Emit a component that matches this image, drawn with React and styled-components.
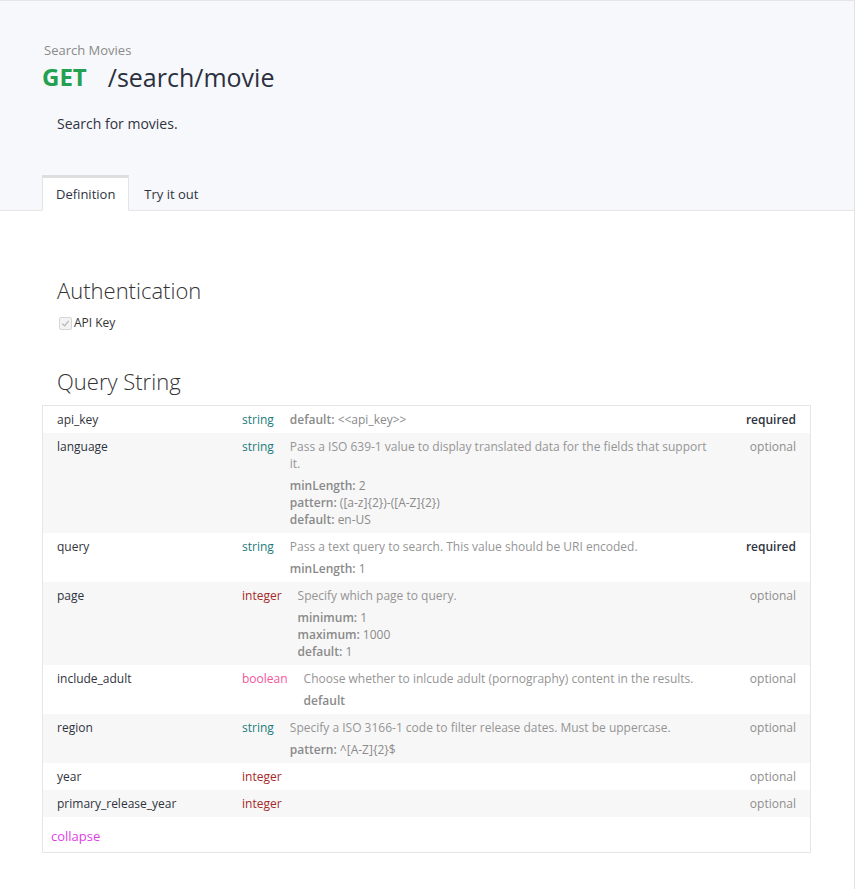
import React from "react";
import styled, { createGlobalStyle } from "styled-components";

const GlobalStyle = createGlobalStyle`
  body {
    margin: 0;
    background: #fff;
    font-family: "Open Sans", "Liberation Sans", sans-serif;
    color: #333;
  }
`;

const Page = styled.div`
  width: 855px;
  min-height: 889px;
  border-right: 1px solid #e2e2e2;
  box-sizing: border-box;
`;

const Header = styled.header`
  background: #f7f8fb;
  border-top: 1px solid #e6e6e6;
  border-bottom: 1px solid #e6e6e6;
  padding: 40px 0 0 42px;
`;

const Summary = styled.div`
  font-size: 13px;
  line-height: 18px;
  color: #8a8a8a;
  padding-left: 2px;
`;

const Endpoint = styled.h1`
  margin: 2px 0 0;
  font-size: 25px;
  line-height: 32px;
  font-weight: 400;
  color: #2b3040;
  display: flex;
  gap: 21px;
`;

const Method = styled.span`
  color: #23a050;
  font-weight: 700;
  font-size: 24px;
`;

const Description = styled.p`
  margin: 21px 0 0 15px;
  font-size: 14px;
  line-height: 20px;
  color: #2f3340;
`;

const Tabs = styled.nav`
  display: flex;
  margin-top: 41px;
  margin-bottom: -1px;
`;

const Tab = styled.button`
  font-family: inherit;
  font-size: 13px;
  color: #2f3340;
  height: 36px;
  padding: 0 13px;
  margin-right: 1px;
  border: 1px solid transparent;
  border-top: 3px solid transparent;
  background: transparent;
  cursor: pointer;

  ${({ active }) =>
    active
      ? `
      background: #fff;
      border-color: #e3e3e3;
      border-top-color: #dedede;
      border-bottom-color: #fff;
  `
      : ``}
`;

const Body = styled.main`
  padding: 64px 43px 40px 42px;
`;

const SectionTitle = styled.h2`
  margin: 0 0 0 15px;
  font-size: 22px;
  line-height: 30px;
  font-weight: 300;
  color: #333;
`;

const AuthItem = styled.label`
  display: flex;
  align-items: center;
  gap: 2px;
  margin: 9px 0 0 17px;
  font-size: 12px;
  line-height: 18px;
  color: #333;
`;

const CheckBox = styled.span`
  width: 11px;
  height: 11px;
  border: 1px solid #d6d6d6;
  border-radius: 2px;
  background: #f3f3f3;
  display: inline-flex;
  align-items: center;
  justify-content: center;
`;

const QueryTitle = styled(SectionTitle)`
  margin-top: 34px;
  margin-bottom: 9px;
`;

const Table = styled.div`
  border: 1px solid #e6e6e6;
`;

const Row = styled.div`
  display: flex;
  align-items: flex-start;
  padding: 5px 14px;
  font-size: 12px;
  line-height: 17px;
  background: ${({ shaded }) => (shaded ? "#f7f7f7" : "#fff")};
`;

const Name = styled.div`
  width: 185px;
  flex-shrink: 0;
  color: #2f3340;
`;

const typeColors = {
  string: "#1d7b7b",
  integer: "#a52828",
  boolean: "#f3569c",
};

const Type = styled.div`
  color: ${({ kind }) => typeColors[kind]};
  margin-right: 16px;
`;

const Details = styled.div`
  flex: 1;
  font-size: 12px;
  color: #959595;
`;

const Constraints = styled.div`
  margin-top: 5px;
  color: #8a8a8a;

  b {
    font-weight: 600;
  }
`;

const Presence = styled.div`
  width: 70px;
  margin-left: 10px;
  text-align: right;
  font-size: 12px;
  color: ${({ required }) => (required ? "#2f3340" : "#8e8e8e")};
  font-weight: ${({ required }) => (required ? 600 : 400)};
`;

const Collapse = styled.div`
  padding: 10px 8px 7px;
  font-size: 13px;
  line-height: 18px;
  color: #e03ce8;
  cursor: pointer;
`;

const params = [
  {
    name: "api_key",
    type: "string",
    required: true,
    inline: [["default", "<<api_key>>"]],
  },
  {
    name: "language",
    type: "string",
    desc: "Pass a ISO 639-1 value to display translated data for the fields that support it.",
    constraints: [
      ["minLength", "2"],
      ["pattern", "([a-z]{2})-([A-Z]{2})"],
      ["default", "en-US"],
    ],
  },
  {
    name: "query",
    type: "string",
    required: true,
    desc: "Pass a text query to search. This value should be URI encoded.",
    constraints: [["minLength", "1"]],
  },
  {
    name: "page",
    type: "integer",
    desc: "Specify which page to query.",
    constraints: [
      ["minimum", "1"],
      ["maximum", "1000"],
      ["default", "1"],
    ],
  },
  {
    name: "include_adult",
    type: "boolean",
    desc: "Choose whether to inlcude adult (pornography) content in the results.",
    constraints: [["default", null]],
  },
  {
    name: "region",
    type: "string",
    desc: "Specify a ISO 3166-1 code to filter release dates. Must be uppercase.",
    constraints: [["pattern", "^[A-Z]{2}$"]],
  },
  { name: "year", type: "integer" },
  { name: "primary_release_year", type: "integer" },
];

const Constraint = ({ label, value }) => (
  <div>
    <b>{value === null ? label : `${label}:`}</b>
    {value !== null ? ` ${value}` : ""}
  </div>
);

const App = () => {
  const [tab, setTab] = React.useState("definition");

  return (
    <Page>
      <GlobalStyle />
      <Header>
        <Summary>Search Movies</Summary>
        <Endpoint>
          <Method>GET</Method>
          <span>/search/movie</span>
        </Endpoint>
        <Description>Search for movies.</Description>
        <Tabs>
          <Tab active={tab === "definition"} onClick={() => setTab("definition")}>
            Definition
          </Tab>
          <Tab active={tab === "try"} onClick={() => setTab("try")}>
            Try it out
          </Tab>
        </Tabs>
      </Header>
      <Body>
        <SectionTitle>Authentication</SectionTitle>
        <AuthItem>
          <CheckBox>
            <svg width="9" height="9" viewBox="0 0 10 10">
              <path
                d="M1.5 5.2 L4 7.6 L8.6 2"
                fill="none"
                stroke="#b5b5b5"
                strokeWidth="1.4"
              />
            </svg>
          </CheckBox>
          API Key
        </AuthItem>
        <QueryTitle>Query String</QueryTitle>
        <Table>
          {params.map((p, index) => (
            <Row key={p.name} shaded={index % 2 === 1}>
              <Name>{p.name}</Name>
              <Type kind={p.type}>{p.type}</Type>
              <Details>
                {p.inline &&
                  p.inline.map(([label, value]) => (
                    <Constraints key={label} style={{ marginTop: 0 }}>
                      <Constraint label={label} value={value} />
                    </Constraints>
                  ))}
                {p.desc && <div>{p.desc}</div>}
                {p.constraints && (
                  <Constraints>
                    {p.constraints.map(([label, value]) => (
                      <Constraint key={label} label={label} value={value} />
                    ))}
                  </Constraints>
                )}
              </Details>
              <Presence required={p.required}>
                {p.required ? "required" : "optional"}
              </Presence>
            </Row>
          ))}
          <Collapse>collapse</Collapse>
        </Table>
      </Body>
    </Page>
  );
};

export default App;
